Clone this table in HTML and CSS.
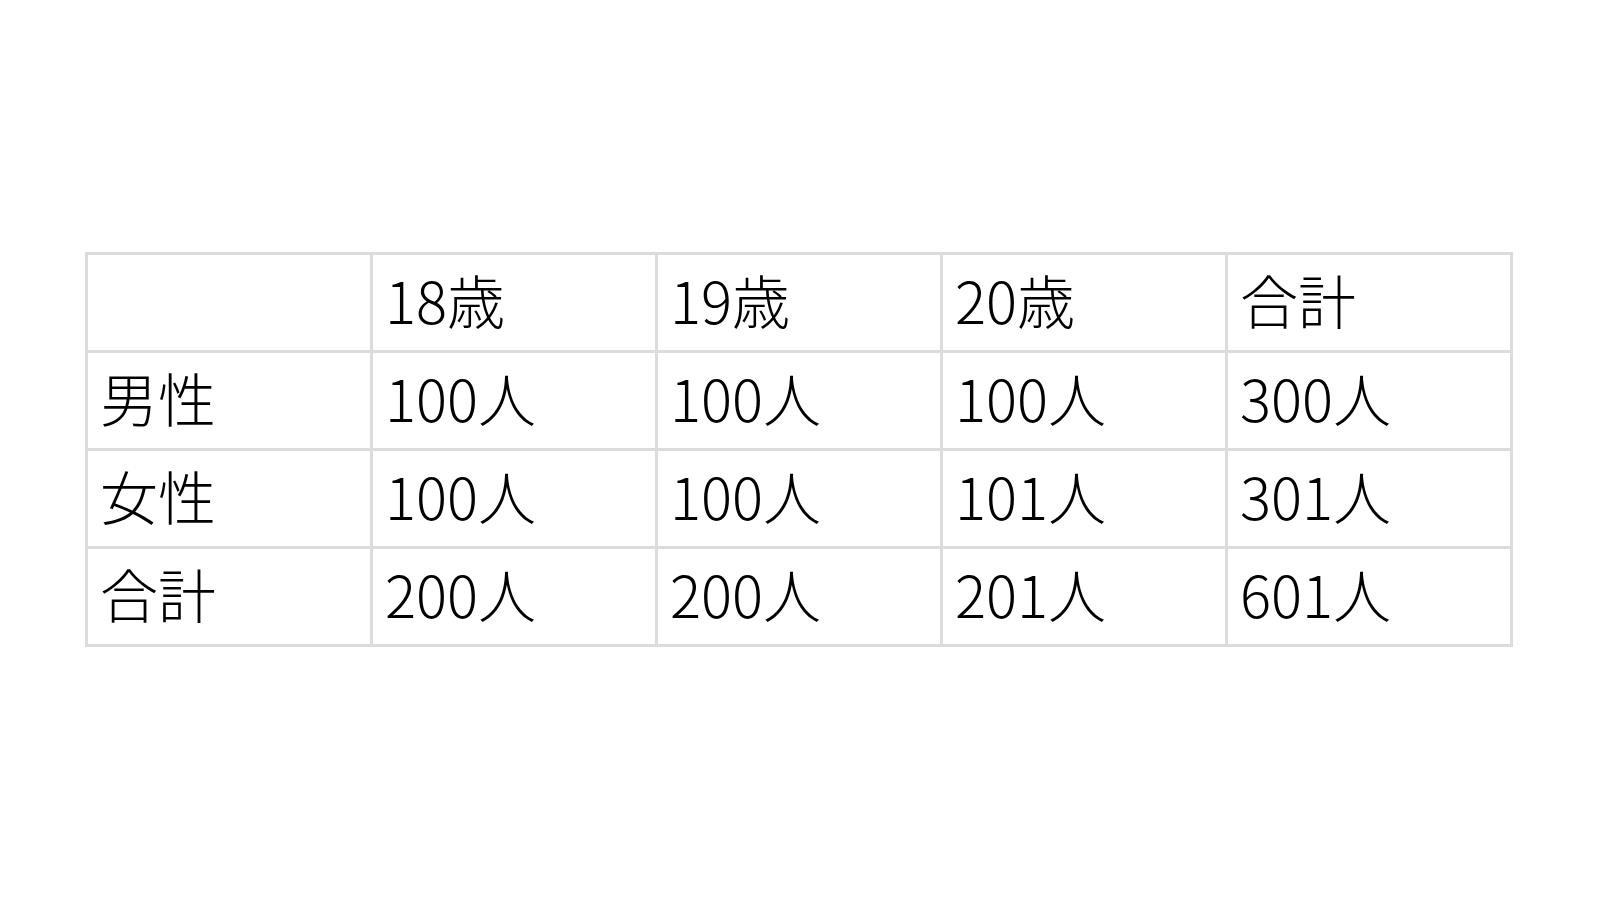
FILE: index.html
```html
<!DOCTYPE html>
<html lang="ja">
<head>
<meta charset="utf-8">
<title>表</title>
<link rel="stylesheet" href="styles.css">
</head>
<body>
<main class="slide">
<table class="grid">
<tr><td></td><td>18歳</td><td>19歳</td><td>20歳</td><td>合計</td></tr>
<tr><td>男性</td><td>100人</td><td>100人</td><td>100人</td><td>300人</td></tr>
<tr><td>女性</td><td>100人</td><td>100人</td><td>101人</td><td>301人</td></tr>
<tr><td>合計</td><td>200人</td><td>200人</td><td>201人</td><td>601人</td></tr>
</table>
</main>
</body>
</html>
```
FILE: styles.css
```css
html, body {
  margin: 0;
  padding: 0;
  background: #ffffff;
}
.slide {
  width: 1600px;
  height: 900px;
  box-sizing: border-box;
  padding: 252px 0 0 85px;
  font-family: "Noto Sans CJK JP", "Noto Sans", sans-serif;
  font-weight: 300;
  color: #000;
}
.grid {
  border-collapse: collapse;
  table-layout: fixed;
  width: 1428px;
}
.grid td {
  box-sizing: border-box;
  border: 3px solid #dcdcdc;
  height: 98px;
  padding: 0 0 8px 12px;
  font-size: 58px;
  line-height: 1;
  vertical-align: middle;
  white-space: nowrap;
}
```
